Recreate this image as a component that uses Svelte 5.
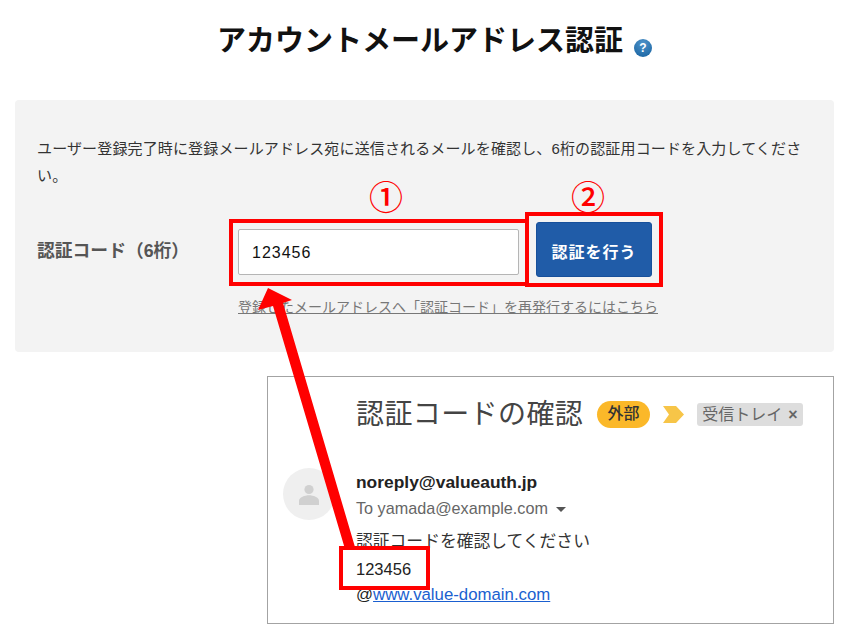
<script>
  const code = '123456';
</script>

<div class="page">
  <h1 class="title">
    アカウントメールアドレス認証
    <span class="help">?</span>
  </h1>

  <section class="panel">
    <p class="lead">ユーザー登録完了時に登録メールアドレス宛に送信されるメールを確認し、6桁の認証用コードを入力してください。</p>
    <div class="form-row">
      <span class="form-label">認証コード（6桁）</span>
      <input class="code-input" type="text" value={code} />
      <button class="submit">認証を行う</button>
    </div>
    <a class="resend" href="#resend">登録したメールアドレスへ「認証コード」を再発行するにはこちら</a>
  </section>

  <section class="mail">
    <div class="mail-head">
      <span class="subject">認証コードの確認</span>
      <span class="tag-ext">外部</span>
      <svg class="chevron" width="21" height="17" viewBox="0 0 21 17"><path d="M0 0H13L21 8.5L13 17H0L6 8.5Z" fill="#f7c548" /></svg>
      <span class="tag-inbox">受信トレイ<b>×</b></span>
    </div>
    <div class="mail-body">
      <div class="avatar">
        <svg width="20" height="21" viewBox="0 0 24 25" fill="#d0d0d0"><circle cx="12" cy="6.5" r="5.5" /><path d="M0 25v-5c0-4 7-6.500 12-6.500s12 2.500 12 6.500v5z" /></svg>
      </div>
      <div class="mail-text">
        <div class="sender">noreply@valueauth.jp</div>
        <div class="to">To yamada@example.com <i class="caret"></i></div>
        <div class="line first">認証コードを確認してください</div>
        <div class="line code">{code}</div>
        <div class="line">@<a href="#site">www.value-domain.com</a></div>
      </div>
    </div>
  </section>

  <!-- 赤い注釈 -->
  <span class="num one">①</span>
  <span class="num two">②</span>
  <div class="mark mark-input"></div>
  <div class="mark mark-button"></div>
  <div class="mark mark-code"></div>
  <svg class="arrow" width="850" height="640" viewBox="0 0 850 640">
    <path d="M268 288L292 300L283 303L355 547L345 549L273 306L258 310Z" fill="#f00" />
  </svg>
</div>

<style>
  :global(body) {
    margin: 0;
    background: #fff;
  }

  .page {
    position: relative;
    width: 850px;
    height: 640px;
    overflow: hidden;
    font-family: "Liberation Sans", "Noto Sans CJK JP", sans-serif;
    color: #222;
  }

  .title {
    margin: 0;
    padding: 21px 0 0 19px;
    height: 81px;
    box-sizing: border-box;
    text-align: center;
    font-size: 29px;
    line-height: 40px;
    font-weight: 700;
    color: #111;
  }

  .help {
    display: inline-block;
    width: 18px;
    height: 18px;
    margin-left: 3px;
    border-radius: 50%;
    background: radial-gradient(circle at 50% 25%, #4f93c9, #14609f);
    color: #fff;
    font-size: 12px;
    line-height: 18px;
    vertical-align: -1px;
  }

  .panel {
    margin: 19px 16px 0 15px;
    height: 252px;
    box-sizing: border-box;
    padding: 35px 22px 0;
    background: #f3f3f3;
    border-radius: 4px;
  }

  .lead {
    margin: 0;
    font-size: 15px;
    line-height: 27px;
    letter-spacing: 0.14px;
    color: #333;
  }

  .form-row {
    display: flex;
    align-items: center;
    margin-top: 33px;
    height: 55px;
  }

  .form-label {
    width: 201px;
    margin-bottom: 2px;
    font-size: 17.8px;
    font-weight: 700;
    color: #555;
    white-space: nowrap;
  }

  .code-input {
    width: 281px;
    height: 46px;
    box-sizing: border-box;
    margin: 5px 17px 0 0;
    padding: 2px 13px 0;
    border: 1px solid #b5b5b5;
    border-radius: 2px;
    background: #fff;
    font: 16px "Liberation Sans", sans-serif;
    letter-spacing: 1px;
    color: #111;
  }

  .submit {
    width: 116px;
    height: 55px;
    padding: 2px 0 0;
    border: 1px solid #17509b;
    border-radius: 3px;
    background: #205ca8;
    color: #fff;
    font-family: inherit;
    font-size: 16px;
    font-weight: 700;
    letter-spacing: 1px;
  }

  .resend {
    display: block;
    margin: 20px 0 0 201px;
    width: 430px;
    font-size: 14px;
    line-height: 20px;
    color: #777;
    white-space: nowrap;
  }

  .mail {
    margin: 24px 0 0 267px;
    width: 567px;
    height: 248px;
    box-sizing: border-box;
    border: 1px solid #a3a3a3;
    background: #fff;
  }

  .mail-head {
    display: flex;
    align-items: center;
    height: 34px;
    margin-top: 20px;
    padding-left: 88px;
  }

  .subject {
    width: 241px;
    margin-bottom: 4px;
    font-size: 28px;
    letter-spacing: 0.4px;
    color: #444;
    white-space: nowrap;
  }

  .tag-ext {
    width: 53px;
    height: 27px;
    border-radius: 14px;
    background: #fbb829;
    text-align: center;
    font-size: 16px;
    font-weight: 500;
    line-height: 26px;
    color: #333;
  }

  .chevron {
    margin: 0 13px;
  }

  .tag-inbox {
    width: 106px;
    height: 23px;
    border-radius: 3px;
    background: #ddd;
    text-align: center;
    font-size: 16px;
    line-height: 23px;
    color: #666;
    white-space: nowrap;
  }

  .tag-inbox b {
    margin-left: 6px;
  }

  .mail-body {
    display: flex;
    margin-top: 30px;
    padding-left: 15px;
  }

  .avatar {
    display: flex;
    align-items: center;
    justify-content: center;
    flex: none;
    width: 52px;
    height: 52px;
    margin-top: 7px;
    border-radius: 50%;
    background: #efefef;
  }

  .mail-text {
    margin-left: 21px;
    padding-top: 8px;
    font-size: 16.8px;
    color: #222;
  }

  .sender {
    font-size: 17.4px;
    font-weight: 700;
    line-height: 26px;
  }

  .to {
    font-size: 16.2px;
    line-height: 26px;
    color: #666;
  }

  .caret {
    display: inline-block;
    margin-left: 4px;
    vertical-align: 2px;
    border: 5px solid transparent;
    border-top-color: #555;
    border-bottom: 0;
  }

  .line {
    line-height: 26px;
  }

  .line.first {
    margin-top: 8px;
    color: #333;
  }

  .line.code {
    margin-top: 1px;
    font-size: 16.5px;
  }

  .line a {
    color: #1a5fd0;
  }

  .num {
    position: absolute;
    color: #f00;
    font-size: 34px;
    line-height: 34px;
    font-weight: 500;
    font-family: "Noto Sans CJK JP", sans-serif;
  }

  .one {
    left: 369px;
    top: 179px;
  }

  .two {
    left: 571px;
    top: 179px;
  }

  .mark {
    position: absolute;
    box-sizing: border-box;
    border: 4px solid #f00;
  }

  .mark-input {
    left: 229px;
    top: 219px;
    width: 300px;
    height: 67px;
  }

  .mark-button {
    left: 525px;
    top: 212px;
    width: 138px;
    height: 75px;
  }

  .mark-code {
    left: 339px;
    top: 546px;
    width: 91px;
    height: 44px;
  }

  .arrow {
    position: absolute;
    left: 0;
    top: 0;
    pointer-events: none;
  }
</style>
